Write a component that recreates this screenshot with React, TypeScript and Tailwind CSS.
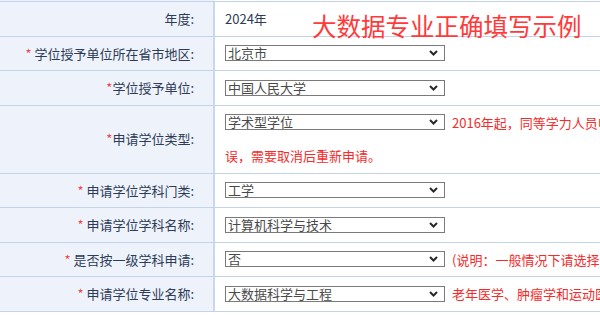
import React from "react";

type Row = {
  label: string;
  star?: "" | " ";
  value?: string;
  select?: string;
  note?: string;
  note2?: string;
};

const rows: Row[] = [
  { label: "年度:", value: "2024年" },
  { label: "学位授予单位所在省市地区:", star: " ", select: "北京市" },
  { label: "学位授予单位:", star: "", select: "中国人民大学" },
  {
    label: "申请学位类型:",
    star: "",
    select: "学术型学位",
    note: "2016年起，同等学力人员申请硕士学位只能选择学术型学位，若选择错",
    note2: "误，需要取消后重新申请。",
  },
  { label: "申请学位学科门类:", star: " ", select: "工学" },
  { label: "申请学位学科名称:", star: " ", select: "计算机科学与技术" },
  {
    label: "是否按一级学科申请:",
    star: " ",
    select: "否",
    note: "(说明：一般情况下请选择“否”，只有申请一级学科的才选择“是”)",
  },
  {
    label: "申请学位专业名称:",
    star: " ",
    select: "大数据科学与工程",
    note: "老年医学、肿瘤学和运动医学等专业请注意",
  },
];

function FakeSelect({ text }: { text: string }) {
  return (
    <div className="flex h-[16px] w-[220px] shrink-0 items-center justify-between border border-[#7a7a7a] bg-white pl-[2px] pr-[6px]">
      <span className="text-[13px] leading-[14px] text-[#4a4a4a]">{text}</span>
      <svg width="9" height="6" viewBox="0 0 9 6" fill="none">
        <path d="M1 1l3.5 3.5L8 1" stroke="#2a2a2a" strokeWidth="2" />
      </svg>
    </div>
  );
}

export default function App() {
  return (
    <div
      className="relative h-[315px] w-[600px] overflow-hidden bg-white"
      style={{ fontFamily: '"Noto Sans CJK SC", "Noto Sans", sans-serif' }}
    >
      <div className="flex h-px">
        <div className="w-[215px] bg-[#eef3fb]" />
        <div className="flex-1 bg-white" />
      </div>
      <div className="border-t border-[#c3d3ea]">
        {rows.map((r) => (
          <div key={r.label} className="flex border-b border-[#c3d3ea]">
            <div className="flex w-[215px] shrink-0 items-center justify-end border-r-2 border-[#c9d8ec] bg-[#eef3fb] pr-[19px] text-[13px] leading-[33.5px] text-[#2d3b56]">
              {r.star !== undefined && (
                <span className="whitespace-pre text-[#f04a4a]">*{r.star}</span>
              )}
              <span>{r.label}</span>
            </div>
            <div className="flex-1 pl-[10px] text-[13px] leading-[33.5px]">
              {r.value && <span className="text-[#2d3b56]">{r.value}</span>}
              {r.select && (
                <div className="flex h-[33.5px] items-center gap-[7px]">
                  <FakeSelect text={r.select} />
                  {r.note && (
                    <span className="whitespace-nowrap text-[#f52a2a]">{r.note}</span>
                  )}
                </div>
              )}
              {r.note2 && <div className="text-[#f52a2a]">{r.note2}</div>}
            </div>
          </div>
        ))}
      </div>
      <div className="absolute left-[312px] top-[10px] text-[24.5px] leading-[32px] text-[#ff3a3a]">
        大数据专业正确填写示例
      </div>
    </div>
  );
}
